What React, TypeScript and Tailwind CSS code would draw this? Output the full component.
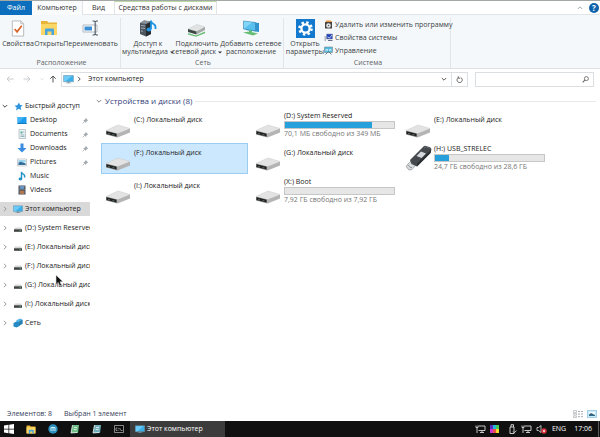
import type { ReactNode } from 'react';

interface IIconProps {
  className?: string;
}

interface IDrive {
  name: string;
  caption?: string;
  used?: number;
  usb?: boolean;
  selected?: boolean;
}

interface INavItem {
  label: string;
  icon: ReactNode;
}

const DRIVES: IDrive[] = [
  { name: '(C:) Локальный диск' },
  { name: '(D:) System Reserved', caption: '70,1 МБ свободно из 349 МБ', used: 80 },
  { name: '(E:) Локальный диск' },
  { name: '(F:) Локальный диск', selected: true },
  { name: '(G:) Локальный диск' },
  { name: '(H:) USB_STRELEC', caption: '24,7 ГБ свободно из 28,6 ГБ', used: 13, usb: true },
  { name: '(I:) Локальный диск' },
  { name: '(X:) Boot', caption: '7,92 ГБ свободно из 7,92 ГБ', used: 0 },
];

function DriveIcon({ className }: IIconProps) {
  return (
    <svg viewBox="0 0 26 14" className={className}>
      <path d="M1 6.5 13 1l12 3.5L12.500 10Z" fill="#e3e3e3" />
      <path d="M12.500 9.500 25 4.500v4L12.500 13.500Z" fill="#b4b4b4" />
      <path d="M1 6.500 12.500 9.500v4L1 10.500Z" fill="#8f8f8f" />
      <path d="M1.500 7.200 11.500 9.800v2.800L1.500 10Z" fill="#1f2220" />
      <path d="M3 9.500 5 10M7.500 10.500l2 .5" stroke="#6f7d75" strokeWidth=".8" />
      <path d="M1 6.500 13 1l12 3.500" fill="none" stroke="#c9c9c9" strokeWidth=".5" />
    </svg>
  );
}

function UsbIcon({ className }: IIconProps) {
  return (
    <svg viewBox="0 0 28 26" className={className}>
      <path d="m2 20 4-4 5 4-4 4.500-3 .500L1.500 22Z" fill="#d9dcde" stroke="#8d9194" strokeWidth=".7" />
      <path d="m3.500 20.500 1 1M5.500 22l1 1" stroke="#4e5355" />
      <path d="M5 15 18.500 1.500q1-1 2.500-.6l4 1.300q1.500.7 1.300 2.300L25.500 8 12 21.500 6.500 19Z" fill="#45494d" />
      <path d="M12 21.500 25.500 8l.8-3.500L12 18.500Z" fill="#2b2e31" />
      <path d="m11.500 11 4.500-4.500 5 2L16.500 13Z" fill="#d6d8dc" />
      <path d="m19 3 2-1.300 3.500 1.500" fill="none" stroke="#73787c" strokeWidth=".7" />
    </svg>
  );
}

function MonitorIcon({ className }: IIconProps) {
  return (
    <svg viewBox="0 0 12 10" className={className}>
      <path d="M.5.500h11v7H.500Z" fill="#3aaee8" stroke="#7d97a8" strokeWidth=".6" />
      <path d="M1 1h9L3 7H1Z" fill="#6ccbf6" />
      <path d="M5 7.500h2v1h2v.800H3v-.800h2Z" fill="#718a99" />
    </svg>
  );
}

function FolderIcon({ className }: IIconProps) {
  return (
    <svg viewBox="0 0 18 16" className={className}>
      <path d="M1 1h6l1.500 1.500H17V15H1Z" fill="#e6b53a" />
      <path d="M1 4h16v11H1Z" fill="#fcd765" />
      <path d="M5 15V9.500q0-1 1-1h7q1 0 1 1V15h-2.500v-3.500h-4V15Z" fill="#48a6dd" />
    </svg>
  );
}

function PropertiesIcon({ className }: IIconProps) {
  return (
    <svg viewBox="0 0 14 18" className={className}>
      <path d="M1 1h9l3 3v13H1Z" fill="#fff" stroke="#a5a9ad" strokeWidth=".8" />
      <path d="M10 1v3h3" fill="none" stroke="#a5a9ad" strokeWidth=".8" />
      <path d="m3.500 9.500 2.500 3 5-6.500" fill="none" stroke="#d9622b" strokeWidth="1.800" />
    </svg>
  );
}

function RenameIcon({ className }: IIconProps) {
  return (
    <svg viewBox="0 0 18 16" className={className}>
      <path d="M1 5h14v7H1Z" fill="#fff" stroke="#9fa8af" strokeWidth=".8" />
      <path d="M2.500 6.500h7.500v4H2.500Z" fill="#3a8fd6" />
      <path d="M10.500 1h1.500l1.200 1 1.200-1H16M13.200 2v12M10.500 15h1.500l1.200-1 1.200 1H16" fill="none" stroke="#55606a" strokeWidth="1.200" />
    </svg>
  );
}

function MediaIcon({ className }: IIconProps) {
  return (
    <svg viewBox="0 0 18 18" className={className}>
      <path d="m1 4 4-2.500 7 1V15l-5 2.500L1 15Z" fill="#4d565e" />
      <path d="m7 5 5-2.500V15l-5 2.500Z" fill="#262b30" />
      <path d="m1 4 4-2.500 7 1L7 5Z" fill="#88939c" />
      <path d="M2 6.500 6 7M2 9l4 .500M2 12l2 .300" stroke="#b5c3ce" strokeWidth=".8" />
      <path d="M12 1.500v8.500M12 1.500q0 2.500 2.500 3.500t2 5" fill="none" stroke="#1e96e3" strokeWidth="1.800" />
      <ellipse cx="10" cy="10.500" rx="2.500" ry="1.900" fill="#1e96e3" />
    </svg>
  );
}

function NetDriveIcon({ className }: IIconProps) {
  return (
    <svg viewBox="0 0 20 14" className={className}>
      <path d="m1 6 9-4.500 8 2.500-8.500 4.500Z" fill="#e2e4e4" stroke="#bcbfc0" strokeWidth=".4" />
      <path d="M9.500 8.500 18 4v3l-8.500 4.500Z" fill="#a5a9a8" />
      <path d="M1 6l8.500 2.500v3L1 9Z" fill="#3d4744" />
      <path d="m1 10 8 2.500 9-4v1.800l-9 3.500-8-2.200Z" fill="#65bd73" />
    </svg>
  );
}

function NetPlaceIcon({ className }: IIconProps) {
  return (
    <svg viewBox="0 0 18 16" className={className}>
      <path d="m4 2 13 1v9L4 10Z" fill="#2e93cf" />
      <path d="m1.500 1 12 1.500v8.500L1.500 9Z" fill="#59bfee" stroke="#3485b5" strokeWidth=".6" />
      <path d="m2 1.500 8 1L2 8.500Z" fill="#84d6f7" />
      <path d="m7 10 3 .500v1.500H7ZM1 12.500l6-1 9 2-5 2Z" fill="#63bd72" />
    </svg>
  );
}

function GearTileIcon({ className }: IIconProps) {
  return (
    <svg viewBox="0 0 18 18" className={className}>
      <path d="M0 0h18v18H0Z" fill="#1379ce" />
      <circle cx="9" cy="9" r="5.700" fill="none" stroke="#fff" strokeWidth="2.400" strokeDasharray="2.238 2.238" />
      <circle cx="9" cy="9" r="3.900" fill="none" stroke="#fff" strokeWidth="2.200" />
    </svg>
  );
}

function UninstallIcon({ className }: IIconProps) {
  return (
    <svg viewBox="0 0 9 9" className={className}>
      <path d="M1 2h7v6.500H1Z" fill="#494340" />
      <path d="M1.500.500h5l2 1.500H2Z" fill="#e5964a" />
      <circle cx="4.500" cy="5.500" r="2.300" fill="#e9edf0" />
      <circle cx="4.500" cy="5.500" r=".8" fill="#4d5860" />
    </svg>
  );
}

function SystemIcon({ className }: IIconProps) {
  return (
    <svg viewBox="0 0 9 9" className={className}>
      <path d="M2.500 1h6v5h-6Z" fill="#2645b8" stroke="#8c93a8" strokeWidth=".6" />
      <path d="m3.500 4 2 1L8 2" fill="none" stroke="#dce6fb" strokeWidth=".8" />
      <path d="M.500 3h1.500v5H.500Z" fill="#b3b8c2" />
      <path d="M4 7.500h4.500" stroke="#6b7288" />
    </svg>
  );
}

function ManageIcon({ className }: IIconProps) {
  return (
    <svg viewBox="0 0 9 9" className={className}>
      <path d="M.500 1h8v5.500h-8Z" fill="#56bbe0" stroke="#72848f" strokeWidth=".6" />
      <path d="M2 5V3.500h1.500V5M5.500 5V3.500H7V5" stroke="#e6f7fc" strokeWidth=".7" fill="none" />
      <path d="m1.500 8.500 3-3 3 3" stroke="#60727c" strokeWidth=".9" fill="none" />
    </svg>
  );
}

function StarIcon({ className }: IIconProps) {
  return (
    <svg viewBox="0 0 9 9" className={className}>
      <path d="m5 .500 1 2.400 2.700.3-2 1.900.5 2.900-2.500-1.300L2 8.500l.7-3L.500 3.800l2.800-.6Z" fill="#2b94dc" />
    </svg>
  );
}

function DesktopIcon({ className }: IIconProps) {
  return (
    <svg viewBox="0 0 10 9" className={className}>
      <path d="M.500 1h9v7h-9Z" fill="#1c9aec" />
      <path d="M.500 1h7l-6 6h-1Z" fill="#42b4f7" />
      <path d="M.500 7.200h9V8h-9Z" fill="#116fae" />
    </svg>
  );
}

function DocumentIcon({ className }: IIconProps) {
  return (
    <svg viewBox="0 0 10 10" className={className}>
      <path d="M2 .500h6.500v9H2Z" fill="#eef3f5" stroke="#99a8af" strokeWidth=".6" />
      <path d="M3.500 2.500h2v2h-2Z" fill="#58aa9a" />
      <path d="M6 3h1.500M3.500 6h4M3.500 7.500h4" stroke="#709aab" strokeWidth=".7" />
    </svg>
  );
}

function DownloadIcon({ className }: IIconProps) {
  return (
    <svg viewBox="0 0 10 10" className={className}>
      <path d="M3.500.500h3V5h3L5 9.500.500 5h3Z" fill="#3a8ce0" />
    </svg>
  );
}

function PictureIcon({ className }: IIconProps) {
  return (
    <svg viewBox="0 0 10 9" className={className}>
      <path d="M.500 1h9v7h-9Z" fill="#fff" stroke="#a8adb1" strokeWidth=".6" />
      <path d="M1.300 2h7.400v2.500H1.300Z" fill="#9dd4ee" />
      <path d="m1.300 7 .2-2.500L4 3.800l4.700 1.700V7Z" fill="#346f9c" />
    </svg>
  );
}

function MusicIcon({ className }: IIconProps) {
  return (
    <svg viewBox="0 0 10 10" className={className}>
      <path d="M4.500 8V.800q.3 1.700 2 2.500T7.500 6.500" fill="none" stroke="#2092c8" strokeWidth="1.400" />
      <ellipse cx="3.400" cy="8" rx="1.900" ry="1.400" fill="#2092c8" />
    </svg>
  );
}

function VideoIcon({ className }: IIconProps) {
  return (
    <svg viewBox="0 0 10 10" className={className}>
      <path d="M1.500.500h7v9h-7Z" fill="#454a52" />
      <path d="M3 1h4v3.500H3Z" fill="#6994bf" />
      <path d="M3 5.500h4V9H3Z" fill="#b0764d" />
      <path d="M2.200 1v8M7.800 1v8" stroke="#c5c8cc" strokeWidth=".6" strokeDasharray=".8 .8" />
    </svg>
  );
}

function SmallDriveIcon({ className }: IIconProps) {
  return (
    <svg viewBox="0 0 10 9" className={className}>
      <path d="M2 3.500h6L9 5.500H1Z" fill="#d5d5d5" />
      <path d="M1 5.300h8V7.800H1Z" fill="#3c4240" />
      <path d="M6.500 6.700H8" stroke="#72c483" strokeWidth=".7" />
    </svg>
  );
}

function NetworkIcon({ className }: IIconProps) {
  return (
    <svg viewBox="0 0 10 10" className={className}>
      <path d="m3.500 2 4-1.500 2 1.300v4l-3.500 2-2.500-1Z" fill="#55b5e6" />
      <path d="m.500 5 3-1.500 3 1V8l-3 1.500-3-1Z" fill="#268ac4" />
      <path d="m6 3.500 3.500-1.700v4L6 7.800Z" fill="#2c7fae" />
    </svg>
  );
}

function PinIcon({ className }: IIconProps) {
  return (
    <svg viewBox="0 0 7 7" className={className}>
      <path d="m3.500.800 2.700 2.700-.9.300-1 1-.3 1.300L1.200 3.300l1.300-.3 1-1Z" fill="#a1a8ae" />
      <path d="M2.500 4.500.600 6.400" stroke="#a1a8ae" strokeWidth=".8" />
    </svg>
  );
}

function ChevronIcon({ className }: IIconProps) {
  return (
    <svg viewBox="0 0 6 6" className={className}>
      <path d="m2 .800 2.200 2.200L2 5.200" fill="none" stroke="currentColor" strokeWidth=".9" />
    </svg>
  );
}

function ArrowIcon({ className }: IIconProps) {
  return (
    <svg viewBox="0 0 8 8" className={className}>
      <path d="M7.500 4H1M3.700 1.300 1 4l2.700 2.700" fill="none" stroke="currentColor" />
    </svg>
  );
}

function BigButton({ icon, lines, className, menu }: { icon: ReactNode; lines: string[]; className: string; menu?: boolean }) {
  return (
    <button type="button" className={`flex flex-col items-center ${className}`}>
      <span className="mb-[2px] flex h-5 items-center">{icon}</span>
      {lines.map((line, i) => (
        <span key={line} className="flex items-center gap-[2px] leading-[8px] whitespace-nowrap">
          {line}
          {menu && i === lines.length - 1 && (
            <svg viewBox="0 0 4 3" className="h-[3px] w-1">
              <path d="M0 .500h4l-2 2Z" fill="#333" />
            </svg>
          )}
        </span>
      ))}
    </button>
  );
}

function SmallButton({ icon, label }: { icon: ReactNode; label: string }) {
  return (
    <button type="button" className="flex h-[13px] items-center gap-[2px] whitespace-nowrap">
      {icon}
      {label}
    </button>
  );
}

function RibbonGroup({ title, className, children }: { title: string; className: string; children: ReactNode }) {
  return (
    <section className={`flex shrink-0 flex-col justify-between border-r border-[#e2e5e8] ${className}`}>
      <div className="flex items-start">{children}</div>
      <h2 className="text-center leading-[10px] text-[#5d6267]">{title}</h2>
    </section>
  );
}

function RibbonTabs() {
  return (
    <nav className="flex h-[15px] items-stretch border-t border-[#a3a8a5] bg-white text-[#333]">
      <button type="button" className="w-8 bg-[#0c6ebd] text-white">Файл</button>
      <button type="button" className="w-[51px] border-r border-[#e2e5e8] bg-[#f9fbfc]">Компьютер</button>
      <button type="button" className="w-[31px] border-b border-[#e2e5e8]">Вид</button>
      <button type="button" className="w-[103px] border-x border-b border-t border-[#e2e5e8] border-t-[#b9d9a6] whitespace-nowrap">
        Средства работы с дисками
      </button>
      <div className="flex flex-1 items-center justify-end gap-[6px] border-b border-[#e2e5e8] pr-[1px]">
        <button type="button" aria-label="Свернуть ленту">
          <ChevronIcon className="size-[6px] -rotate-90 text-[#9a9fa3]" />
        </button>
        <button type="button" className="flex size-[10px] items-center justify-center rounded-full bg-[#0f62ac] text-[8px] font-bold text-white">?</button>
      </div>
    </nav>
  );
}

function Ribbon() {
  return (
    <div className="flex h-[54px] border-b border-[#dde1e4] bg-[#f5f8fa] pt-[3px] text-[#3a3f44]">
      <RibbonGroup title="Расположение" className="w-[121px] pl-[3px]">
        <BigButton className="w-[30px]" lines={['Свойства']} icon={<PropertiesIcon className="h-[17px] w-[14px]" />} />
        <BigButton className="w-8" lines={['Открыть']} icon={<FolderIcon className="h-4 w-[18px]" />} />
        <BigButton className="w-[51px]" lines={['Переименовать']} icon={<RenameIcon className="h-4 w-[18px]" />} />
      </RibbonGroup>
      <RibbonGroup title="Сеть" className="w-[163px] pl-[2px]">
        <BigButton menu className="w-[50px]" lines={['Доступ к', 'мультимедиа']} icon={<MediaIcon className="size-[18px]" />} />
        <BigButton menu className="w-12" lines={['Подключить', 'сетевой диск']} icon={<NetDriveIcon className="mt-1 h-[14px] w-5" />} />
        <BigButton className="w-[60px]" lines={['Добавить сетевое', 'расположение']} icon={<NetPlaceIcon className="h-4 w-[18px]" />} />
      </RibbonGroup>
      <RibbonGroup title="Система" className="w-[167px] pl-[2px]">
        <BigButton className="w-[38px]" lines={['Открыть', 'параметры']} icon={<GearTileIcon className="size-[19px]" />} />
        <div className="flex flex-col items-start">
          <SmallButton label="Удалить или изменить программу" icon={<UninstallIcon className="size-[9px]" />} />
          <SmallButton label="Свойства системы" icon={<SystemIcon className="size-[9px]" />} />
          <SmallButton label="Управление" icon={<ManageIcon className="size-[9px]" />} />
        </div>
      </RibbonGroup>
    </div>
  );
}

function AddressBar() {
  return (
    <div className="flex h-5 items-center pr-[6px] pl-[6px]">
      <div className="flex w-[55px] items-center gap-[9px] text-[#c8cbce]">
        <button type="button" aria-label="Назад"><ArrowIcon className="size-2" /></button>
        <button type="button" aria-label="Вперёд"><ArrowIcon className="size-2 rotate-180" /></button>
        <ChevronIcon className="size-1 rotate-90" />
        <button type="button" aria-label="Вверх" className="-ml-1"><ArrowIcon className="size-2 rotate-90 text-[#555]" /></button>
      </div>
      <div className="flex h-[15px] flex-1 items-center border border-[#dcdfe1]">
        <MonitorIcon className="ml-[1px] h-[9px] w-[11px]" />
        <ChevronIcon className="mx-[2px] size-[6px] text-[#444]" />
        <a href="#computer" className="ml-1 flex-1 text-[#222]">Этот компьютер</a>
        <button type="button" aria-label="История" className="flex h-full w-4 items-center justify-center border-r border-[#dcdfe1]">
          <ChevronIcon className="size-[6px] rotate-90 text-[#444]" />
        </button>
        <button type="button" aria-label="Обновить" className="flex w-[15px] justify-center">
          <svg viewBox="0 0 8 8" className="size-[7px]">
            <path d="M2.500 2A3 3 0 1 0 5.500 1.800M2.500.300V2.500H4.800" fill="none" stroke="#555" />
          </svg>
        </button>
      </div>
      <label className="ml-[7px] flex h-[15px] w-[119px] items-center border border-[#dcdfe1] pr-1">
        <input type="search" aria-label="Поиск" className="w-0 flex-1 outline-none" />
        <svg viewBox="0 0 8 8" className="size-[7px]">
          <circle cx="5" cy="3" r="2.300" fill="none" stroke="#666" />
          <path d="M3.300 4.700.700 7.300" stroke="#666" strokeWidth="1.200" />
        </svg>
      </label>
    </div>
  );
}

const QUICK_ITEMS: (INavItem & { pinned: boolean })[] = [
  { label: 'Desktop', pinned: true, icon: <DesktopIcon className="h-[9px] w-[10px]" /> },
  { label: 'Documents', pinned: true, icon: <DocumentIcon className="size-[10px]" /> },
  { label: 'Downloads', pinned: true, icon: <DownloadIcon className="size-[10px]" /> },
  { label: 'Pictures', pinned: true, icon: <PictureIcon className="h-[9px] w-[10px]" /> },
  { label: 'Music', pinned: false, icon: <MusicIcon className="size-[10px]" /> },
  { label: 'Videos', pinned: false, icon: <VideoIcon className="size-[10px]" /> },
];

const TREE_ITEMS: INavItem[] = [
  { label: 'Этот компьютер', icon: <MonitorIcon className="h-[9px] w-[10px]" /> },
  { label: '(D:) System Reserved', icon: <SmallDriveIcon className="h-[9px] w-[10px]" /> },
  { label: '(E:) Локальный диск', icon: <SmallDriveIcon className="h-[9px] w-[10px]" /> },
  { label: '(F:) Локальный диск', icon: <SmallDriveIcon className="h-[9px] w-[10px]" /> },
  { label: '(G:) Локальный диск', icon: <SmallDriveIcon className="h-[9px] w-[10px]" /> },
  { label: '(I:) Локальный диск', icon: <SmallDriveIcon className="h-[9px] w-[10px]" /> },
  { label: 'Сеть', icon: <NetworkIcon className="size-[10px]" /> },
];

function Sidebar() {
  return (
    <aside className="w-[90px] shrink-0 overflow-hidden pt-[10px] text-[#222]">
      <a href="#quick" className="flex h-[14px] items-center pl-[2px]">
        <ChevronIcon className="mr-[6px] size-[6px] rotate-90 text-[#333]" />
        <StarIcon className="mr-[2px] size-[9px]" />
        Быстрый доступ
      </a>
      <ul>
        {QUICK_ITEMS.map((item) => (
          <li key={item.label}>
            <a href="#folder" className="flex h-[14px] items-center pr-[1px] pl-[17px]">
              {item.icon}
              <span className="ml-[3px] flex-1">{item.label}</span>
              {item.pinned && <PinIcon className="size-[7px]" />}
            </a>
          </li>
        ))}
      </ul>
      <ul className="mt-[5px] flex flex-col gap-[5px]">
        {TREE_ITEMS.map((item, i) => (
          <li key={item.label}>
            <a href="#node" className={`flex h-[14px] items-center pl-[2px] whitespace-nowrap ${i === 0 ? 'bg-[#d9d9d9]' : ''}`}>
              <ChevronIcon className="mr-[5px] size-[6px] shrink-0 text-[#8d8d8d]" />
              <span className="mr-[2px] shrink-0">{item.icon}</span>
              {item.label}
            </a>
          </li>
        ))}
      </ul>
    </aside>
  );
}

function DriveTile({ drive }: { drive: IDrive }) {
  const hasBar = drive.used !== undefined;

  return (
    <button
      type="button"
      className={`flex h-[31px] items-start border pl-[3px] text-left whitespace-nowrap ${drive.selected ? 'border-[#99cdf2] bg-[#cce8ff]' : 'border-transparent'}`}
    >
      {drive.usb ? <UsbIcon className="mt-[1px] h-[26px] w-7 shrink-0" /> : <DriveIcon className="mt-[13px] h-[14px] w-[26px] shrink-0" />}
      <span className={`flex flex-col text-[#222] ${drive.usb ? 'ml-[1px]' : 'ml-[3px]'} ${hasBar ? '' : 'pt-1'}`}>
        <span className="leading-[10px]">{drive.name}</span>
        {hasBar && (
          <>
            <span className="block h-2 w-[111px] border border-[#c6c6c6] bg-[#e6e6e6]">
              <span className="block h-full bg-[#26a0da]" style={{ width: `${drive.used}%` }} />
            </span>
            <span className="leading-[10px] text-[#767676]">{drive.caption}</span>
          </>
        )}
      </span>
    </button>
  );
}

function Content() {
  return (
    <section className="min-w-0 flex-1 pt-[7px] pr-1 pl-[6px]">
      <h1 className="flex h-[10px] items-center gap-[3px] text-[8px] whitespace-nowrap text-[#34417a]">
        <ChevronIcon className="size-[6px] rotate-90 text-[#777]" />
        Устройства и диски (8)
        <span className="h-px flex-1 bg-[#e6e8ea]" />
      </h1>
      <div className="mt-1 grid grid-cols-[repeat(auto-fill,147px)] gap-x-[3px] gap-y-[2px] pl-[5px]">
        {DRIVES.map((drive) => <DriveTile key={drive.name} drive={drive} />)}
      </div>
    </section>
  );
}

function StatusBar() {
  return (
    <footer className="flex h-[15px] items-center gap-3 pr-[3px] pl-[7px] text-[#34405a]">
      <span>Элементов: 8</span>
      <span className="flex-1">Выбран 1 элемент</span>
      <span className="flex gap-1">
        <button type="button" aria-label="Таблица">
          <svg viewBox="0 0 10 8" className="h-2 w-[10px]">
            <path d="M.500.500h3v2h-3ZM.500 3.500h3v1.500h-3ZM.500 6h3v1.500h-3Z" fill="none" stroke="#a3a9ad" strokeWidth=".6" />
            <path d="M5 1.500h2M8 1.500h2M5 4h2M8 4h2M5 6.700h2M8 6.700h2" stroke="#8d959b" strokeWidth=".8" />
          </svg>
        </button>
        <button type="button" aria-label="Крупные значки" className="bg-[#cdeaf8]">
          <svg viewBox="0 0 10 8" className="h-2 w-[10px]">
            <path d="M.500.500h9v7h-9Z" fill="none" stroke="#80bedb" strokeWidth=".6" />
            <path d="M2 2h6v4H2Z" fill="#f4fafc" />
            <path d="M2 4.500 4 3l4 2v1H2Z" fill="#346684" />
          </svg>
        </button>
      </span>
    </footer>
  );
}

function TrayMonitor() {
  return (
    <svg viewBox="0 0 11 10" className="h-[10px] w-[11px]">
      <path d="M3.500 2H10v4.500H3.500M5 8.500h4M7 6.500v2M2 3.500V9M1 1.500v2h2v-2" fill="none" stroke="#d9d9d9" strokeWidth=".9" />
    </svg>
  );
}

function Script({ color }: { color: string }) {
  return (
    <svg viewBox="0 0 10 10" className="size-[10px]">
      <path d="M2.500 1H9L8 9H1Z" fill={color} />
      <path d="M2.500 1 1 9l6-.500" fill="none" stroke="#eef5f0" strokeWidth=".8" />
      <path d="M4 3.500h3M3.700 5.500h3" stroke="#f5fffa" strokeWidth=".7" />
    </svg>
  );
}

function Taskbar() {
  return (
    <div className="flex h-4 items-center bg-[#101010] text-white">
      <div className="flex w-[130px] items-center gap-3 pl-1">
        <button type="button" aria-label="Пуск">
          <svg viewBox="0 0 10 10" className="size-[10px]">
            <path d="M0 1.500 4.500.800v3.900H0ZM5.200.700 10 0v4.700H5.200ZM0 5.400h4.500v3.900L0 8.600ZM5.200 5.400H10V10l-4.800-.7Z" fill="#fff" />
          </svg>
        </button>
        <button type="button" aria-label="Проводник"><FolderIcon className="h-[9px] w-[10px]" /></button>
        <button type="button" aria-label="Сеть PE">
          <svg viewBox="0 0 10 10" className="size-[10px]">
            <circle cx="5" cy="5" r="4.700" fill="#2b92bf" />
            <path d="M3 7V3.500h2V7M5 3.500h2V7" fill="none" stroke="#e2f5fb" strokeWidth=".9" />
          </svg>
        </button>
        <button type="button" aria-label="Сценарий 1"><Script color="#71bd88" /></button>
        <button type="button" aria-label="Сценарий 2"><Script color="#73aeba" /></button>
        <button type="button" aria-label="Командная строка">
          <svg viewBox="0 0 10 8" className="h-2 w-[10px]">
            <path d="M.500.500h9v7h-9Z" fill="#0a0a0a" stroke="#bdbdbd" strokeWidth=".7" />
            <path d="M3.500 3H2v2.500h1.500M4.700 3v.800M4.700 4.800v.700M5.700 3l1 2.500M7 5.500h1.500" stroke="#ddd" strokeWidth=".6" fill="none" />
          </svg>
        </button>
      </div>
      <button type="button" className="flex h-full w-[95px] items-center gap-[2px] bg-[#3c3c3c] pl-[5px] whitespace-nowrap">
        <MonitorIcon className="h-[9px] w-[10px]" />
        Этот компьютер
      </button>
      <div className="ml-auto flex h-full items-center gap-1 pr-[1px]">
        <TrayMonitor />
        <svg viewBox="0 0 9 8" className="h-2 w-[9px]">
          <path d="M0 0h3v4H0Z" fill="#5630bd" />
          <path d="M3 0h3v4H3Z" fill="#22b6dc" />
          <path d="M6 0h3v4H6Z" fill="#46ca56" />
          <path d="M0 4h3v4H0Z" fill="#cb35ce" />
          <path d="M3 4h3v4H3Z" fill="#e85050" />
          <path d="M6 4h3v4H6Z" fill="#f4d72d" />
        </svg>
        <svg viewBox="0 0 10 10" className="ml-1 size-[10px]">
          <path d="M3 3h4v6.500H3ZM4 3V.700h2.500V3" fill="none" stroke="#dedede" strokeWidth=".9" />
          <path d="m6 7.500 1.300 1.300L9.500 6.500" fill="none" stroke="#dedede" strokeWidth=".8" />
        </svg>
        <TrayMonitor />
        <svg viewBox="0 0 11 10" className="h-[10px] w-[11px]">
          <path d="M1 3.500h1.500L5 1.500v7L2.500 6.500H1Z" fill="none" stroke="#e0e0e0" strokeWidth=".8" />
          <circle cx="8" cy="7" r="2.700" fill="#d9333c" />
          <path d="m7 6 2 2M9 6 7 8" stroke="#fff" strokeWidth=".7" />
        </svg>
        <span className="ml-[1px]">ENG</span>
        <time className="mr-[2px] ml-1">17:06</time>
        <span className="h-full w-px bg-[#5a5a5a]" />
      </div>
    </div>
  );
}

function App() {
  return (
    <div className="relative flex min-h-screen flex-col overflow-hidden bg-white font-['Open_Sans','Noto_Sans',sans-serif] text-[7px] leading-[10px]">
      <RibbonTabs />
      <Ribbon />
      <AddressBar />
      <main className="flex flex-1">
        <Sidebar />
        <Content />
      </main>
      <StatusBar />
      <Taskbar />
      <svg viewBox="0 0 9 13" className="pointer-events-none absolute top-[274px] left-[55px] h-[13px] w-[9px]">
        <path d="M1 1v9.500l2.200-2 1.500 3.500 1.800-.8L5 7.800h3Z" fill="#111" stroke="#ddd" strokeWidth=".6" />
      </svg>
    </div>
  );
}

export default App;
